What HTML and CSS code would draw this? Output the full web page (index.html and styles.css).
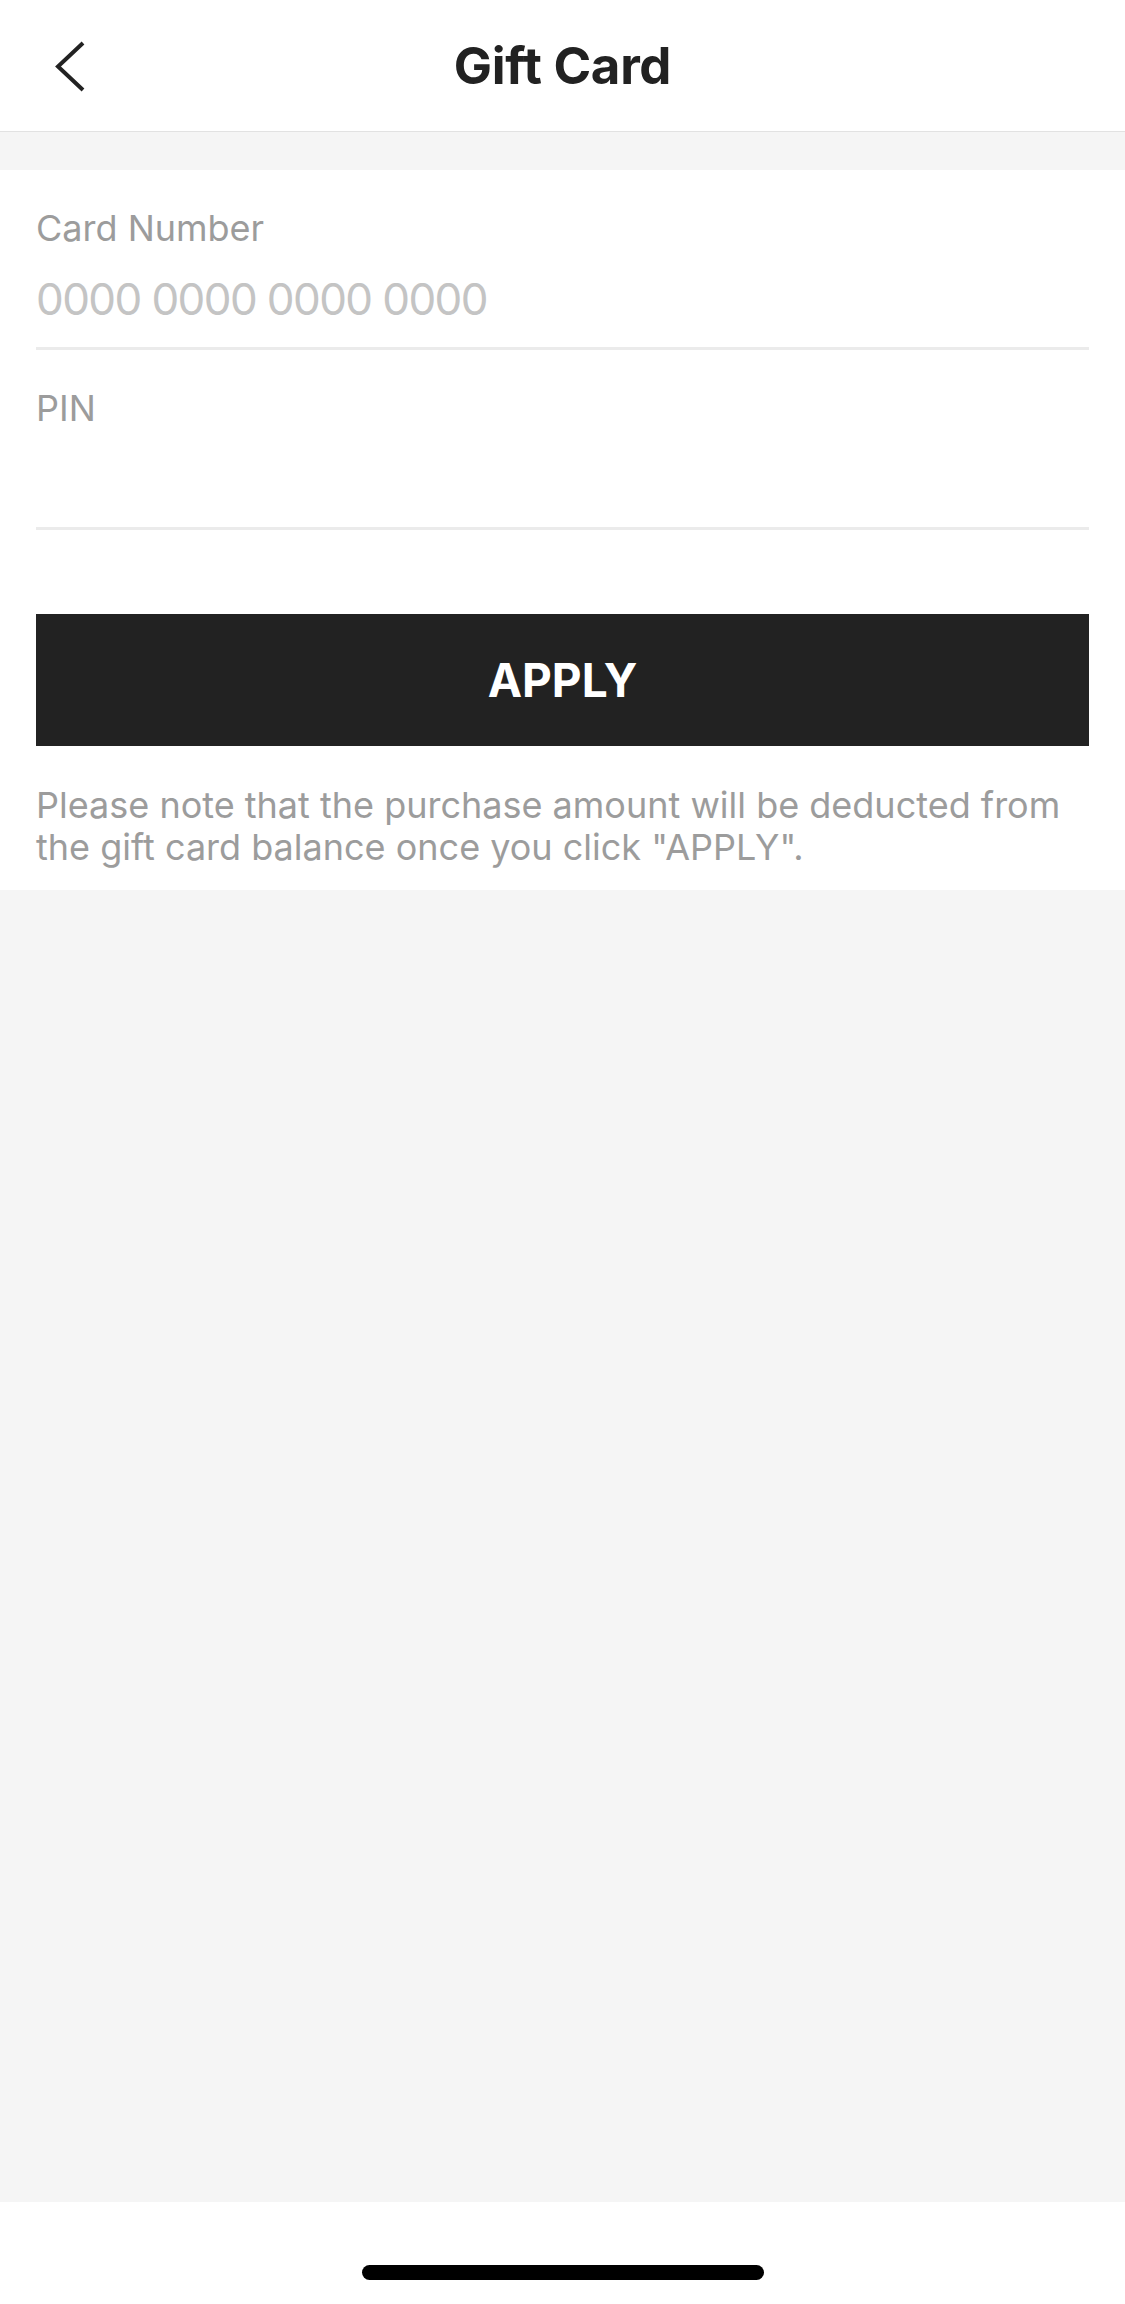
FILE: index.html
```html
<!DOCTYPE html>
<html lang="en">
<head>
    <meta charset="UTF-8">
    <meta name="viewport" content="width=device-width, initial-scale=1.0">
    <title>Gift Card</title>
    <link rel="stylesheet" href="styles.css">
</head>
<body>

    <!-- Navbar -->
    <div class="navbar">
        <button class="back-btn" aria-label="Back">
            <svg width="40" height="60" viewBox="0 0 40 60">
                <polyline points="33,7 8,30.5 33,54" fill="none" stroke="#222" stroke-width="4" stroke-linecap="butt" stroke-linejoin="miter"/>
            </svg>
        </button>
        <div class="nav-title">Gift Card</div>
    </div>

    <!-- Gift card form -->
    <div class="card-form">
        <div class="field">
            <label class="field-label" for="card-number">Card Number</label>
            <input class="field-input" id="card-number" type="text" placeholder="0000 0000 0000 0000">
        </div>
        <div class="field">
            <label class="field-label" for="pin">PIN</label>
            <input class="field-input" id="pin" type="password">
        </div>

        <button class="apply-btn">APPLY</button>

        <p class="note">Please note that the purchase amount will be deducted from the gift card balance once you click "APPLY".</p>
    </div>

    <div class="spacer"></div>

    <!-- Home indicator -->
    <div class="bottom-bar">
        <div class="home-indicator"></div>
    </div>

</body>
</html>
```

FILE: styles.css
```css
/* General styles */
body {
    font-family: 'Inter', 'Liberation Sans', sans-serif;
    margin: 0;
    padding: 0;
    background-color: #f5f5f5;
    display: flex;
    flex-direction: column;
    height: 2304px;
    overflow: hidden;
}

/* Navbar */
.navbar {
    position: relative;
    height: 131px;
    background-color: #fff;
    border-bottom: 1px solid #e2e2e2;
    display: flex;
    align-items: center;
    justify-content: center;
    flex-shrink: 0;
}

.back-btn {
    position: absolute;
    left: 50px;
    top: 36px;
    padding: 0;
    border: none;
    background: transparent;
    width: 40px;
    height: 60px;
    cursor: pointer;
}

.back-btn svg {
    display: block;
}

.nav-title {
    font-size: 51px;
    font-weight: 700;
    color: #222;
    letter-spacing: -0.3px;
}

/* Form */
.card-form {
    background-color: #fff;
    margin-top: 38px;
    padding: 0 36px 22px;
    flex-shrink: 0;
}

.field {
    padding-top: 36px;
    border-bottom: 3px solid #ebebeb;
    display: flex;
    flex-direction: column;
}

.field-label {
    font-size: 36px;
    line-height: 44px;
    color: #9c9c9c;
}

.field-input {
    margin-top: 22px;
    margin-bottom: 21px;
    height: 54px;
    padding: 0;
    border: none;
    outline: none;
    font-family: inherit;
    font-size: 44px;
    letter-spacing: -1.6px;
    color: #222;
    background: transparent;
}

.field-input::placeholder {
    color: #c4c4c4;
}

/* Apply button */
.apply-btn {
    display: block;
    width: 100%;
    height: 132px;
    margin-top: 84px;
    border: none;
    background-color: #222;
    color: #fff;
    font-family: inherit;
    font-size: 46px;
    font-weight: 700;
    cursor: pointer;
}

.note {
    margin: 38px 0 0;
    font-size: 36px;
    line-height: 42px;
    color: #9c9c9c;
}

.spacer {
    flex: 1;
}

/* Bottom bar */
.bottom-bar {
    height: 102px;
    background-color: #fff;
    display: flex;
    justify-content: center;
    flex-shrink: 0;
}

.home-indicator {
    width: 402px;
    height: 15px;
    margin-top: 63px;
    border-radius: 8px;
    background-color: #000;
}
```
